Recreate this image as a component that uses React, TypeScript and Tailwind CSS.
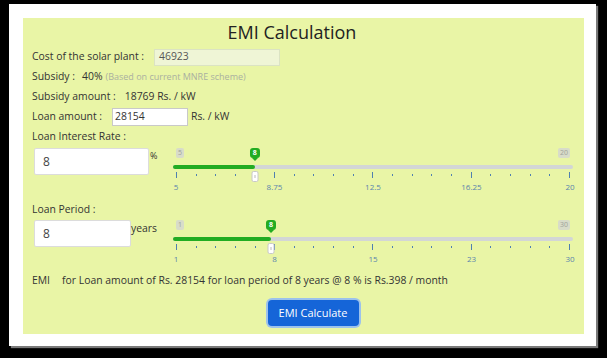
import React from 'react';

interface SliderProps {
  min: number;
  max: number;
  value: number;
  labels: string[];
}

const ticks = Array.from({ length: 21 }, (_, i) => i);

const RangeSlider: React.FC<SliderProps> = ({ min, max, value, labels }) => {
  const pct = ((value - min) / (max - min)) * 100;

  return (
    <div className="relative w-[400px] px-[3px]">
      {/* min / max boxes */}
      <div className="flex h-[12px] justify-between">
        <span className="h-[10px] rounded-[2px] bg-[#d8dcc9] px-[2px] text-[7px] leading-[10px] text-[#a0a39a]">{min}</span>
        <span className="h-[10px] rounded-[2px] bg-[#d8dcc9] px-[2px] text-[7px] leading-[10px] text-[#a0a39a]">{max}</span>
      </div>

      {/* track */}
      <div className="relative mx-[-3px] mt-[5px] h-[4px] rounded-full bg-[#d3d6d6]">
        <div className="h-full rounded-full bg-[#22ac22]" style={{ width: `calc(3px + (100% - 6px) * ${pct / 100})` }} />
      </div>

      {/* ticks */}
      <div className="mt-[3px] flex h-[6px] items-center justify-between">
        {ticks.map((t) => (
          <div
            key={t}
            className={t % 5 === 0 ? 'h-[6px] w-px bg-[#4f80b0]' : 'h-[2px] w-px bg-[#4f80b0]'}
          />
        ))}
      </div>

      {/* scale labels */}
      <div className="mt-[4px] flex justify-between">
        {labels.map((l) => (
          <div key={l} className="flex w-0 justify-center whitespace-nowrap text-[8px] leading-[10px] text-[#5a84ad]">
            {l}
          </div>
        ))}
      </div>

      {/* value bubble + handle */}
      <div className="absolute inset-x-[3px] top-0 h-0">
        <div className="absolute top-0 flex -translate-x-1/2 flex-col items-center" style={{ left: `${pct}%` }}>
          <div className="h-[10px] rounded-[3px] bg-[#22ac22] px-[3px] text-[7px] font-bold leading-[10px] text-white">{value}</div>
          <div className="h-0 w-0 border-x-[3px] border-t-[3px] border-x-transparent border-t-[#22ac22]" />
        </div>
        <div
          className="absolute top-[23px] flex h-[11px] w-[7px] -translate-x-1/2 items-center justify-center rounded-[2px] border border-[#c8c8c8] bg-white"
          style={{ left: `${pct}%` }}
        >
          <div className="h-[3px] w-px bg-[#bbb]" />
        </div>
      </div>
    </div>
  );
};

const App: React.FC = () => {
  return (
    <div className="h-[358px] w-[607px] bg-black pb-[12px] pl-[9px] pr-[11px] pt-[4px] font-['Open_Sans',sans-serif] text-[#333]">
      <div className="h-full bg-white pb-[12px] pl-[14px] pr-[12px] pt-[14px] shadow-[2px_2px_1px_#7a7a7a]">
        <div className="h-full bg-[#e9f5a6] text-[10.4px]">
          {/* Title */}
          <h1 className="pr-[23px] pt-[2px] text-center text-[18px] leading-[24px] text-[#222]">EMI Calculation</h1>

          <div className="mt-[3px] pl-[9px]">
            <div className="flex h-[20px] items-center">
              <span className="w-[122px]">Cost of the solar plant :</span>
              <div className="flex h-[17px] w-[126px] items-center border border-[#dbe3c3] bg-[#eff5d6] px-[4px] text-[#555]">46923</div>
            </div>

            <div className="flex h-[20px] items-center">
              <span>Subsidy :</span>
              <span className="ml-[7px]">40%</span>
              <span className="ml-[3px] text-[9px] text-[#a9b0a0]">(Based on current MNRE scheme)</span>
            </div>

            <div className="flex h-[20px] items-center">
              <span>Subsidy amount :</span>
              <span className="ml-[9px]">18769 Rs. / kW</span>
            </div>

            <div className="flex h-[20px] items-center">
              <span className="w-[80px]">Loan amount :</span>
              <div className="flex h-[18px] w-[76px] items-center border border-[#c9c9c9] bg-white px-[2px]">28154</div>
              <span className="ml-[3px]">Rs. / kW</span>
            </div>

            <div className="flex h-[20px] items-center">Loan Interest Rate :</div>
          </div>

          {/* interest block */}
          <div className="mt-[1px] flex h-[52px] pl-[11px]">
            <div className="flex w-[139px] items-start">
              <div className="flex h-[27px] w-[115px] items-center rounded-[2px] border border-[#dcdcdc] bg-white pl-[8px] text-[12px] text-[#444]">8</div>
              <span className="ml-[1px] mt-[1px] text-[9px]">%</span>
            </div>
            <RangeSlider min={5} max={20} value={8} labels={['5', '8.75', '12.5', '16.25', '20']} />
          </div>

          <div className="flex h-[20px] items-center pl-[9px]">Loan Period :</div>

          {/* period block */}
          <div className="flex h-[51px] pl-[11px]">
            <div className="flex w-[139px] items-start">
              <div className="flex h-[27px] w-[97px] items-center rounded-[2px] border border-[#dcdcdc] bg-white pl-[8px] text-[12px] text-[#444]">8</div>
              <span className="mt-[1px]">years</span>
            </div>
            <RangeSlider min={1} max={30} value={8} labels={['1', '8', '15', '23', '30']} />
          </div>

          <div className="flex h-[20px] items-center pl-[9px]">
            <span>EMI</span>
            <span className="ml-[12px]">for Loan amount of Rs. 28154 for loan period of 8 years @ 8 % is Rs.398 / month</span>
          </div>

          <div className="mt-[9px] flex justify-center pl-[19px]">
            <button className="h-[26px] w-[91px] rounded-[4px] bg-[#1565d8] text-[11px] text-white ring-2 ring-[#9cc2ec]">
              EMI Calculate
            </button>
          </div>
        </div>
      </div>
    </div>
  );
};

export default App;
